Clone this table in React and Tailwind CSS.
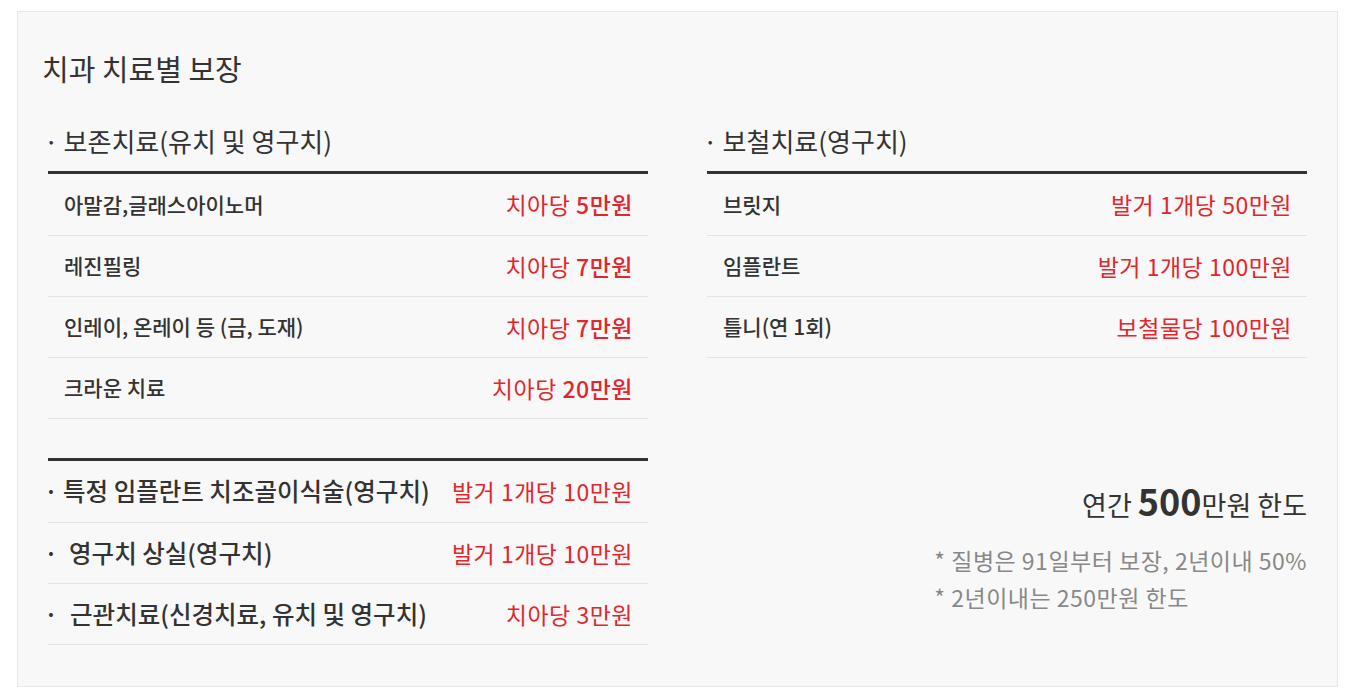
import React from 'react';

const FONT = { fontFamily: '"Noto Sans CJK KR", "Noto Sans", sans-serif' };

const basicRows = [
  { name: '아말감,글래스아이노머', unit: '치아당', amount: '5만원' },
  { name: '레진필링', unit: '치아당', amount: '7만원' },
  { name: '인레이, 온레이 등 (금, 도재)', unit: '치아당', amount: '7만원' },
  { name: '크라운 치료', unit: '치아당', amount: '20만원' },
];

const extraRows = [
  { name: '특정 임플란트 치조골이식술(영구치)', value: '발거 1개당 10만원', gap: 'mr-[5px]' },
  { name: '영구치 상실(영구치)', value: '발거 1개당 10만원', gap: 'mr-[11px]' },
  { name: '근관치료(신경치료, 유치 및 영구치)', value: '치아당 3만원', gap: 'mr-[12px]' },
];

const prostheticRows = [
  { name: '브릿지', value: '발거 1개당 50만원' },
  { name: '임플란트', value: '발거 1개당 100만원' },
  { name: '틀니(연 1회)', value: '보철물당 100만원' },
];

const SectionTitle = ({ children }) => (
  <h3 className="text-[26px] leading-[30px] text-[#333] mb-[15px]">
    <span className="-ml-[4px] mr-[5px]">·</span>
    {children}
  </h3>
);

const Row = ({ children }) => (
  <li className="flex items-center justify-between h-[61px] first:h-[62px] border-b border-[#e3e3e3] pl-[16px] pr-[15px]">
    {children}
  </li>
);

export default function App() {
  return (
    <div className="min-h-screen bg-white pt-[11px] pl-[17px]" style={FONT}>
      <div className="w-[1321px] h-[676px] border border-[#e8e8e8] bg-[#f8f8f8] px-[30px] pt-[40px]">
        <h2 className="-ml-[6px] text-[29px] leading-[32px] text-[#333]">치과 치료별 보장</h2>

        <div className="mt-[42px] flex justify-between">
          {/* 왼쪽: 보존치료 + 기타 */}
          <div className="w-[600px]">
            <SectionTitle>보존치료(유치 및 영구치)</SectionTitle>
            <ul className="border-t-[3px] border-[#333]">
              {basicRows.map((r) => (
                <Row key={r.name}>
                  <span className="text-[21px] font-medium text-[#333]">{r.name}</span>
                  <span className="text-[23px] text-[#e2262c] tracking-[0.5px]">
                    {r.unit} <span className="font-medium">{r.amount}</span>
                  </span>
                </Row>
              ))}
            </ul>

            <ul className="mt-[39px] border-t-[3px] border-[#333]">
              {extraRows.map((r) => (
                <li
                  key={r.name}
                  className="flex items-center justify-between h-[61px] first:h-[62px] border-b border-[#e3e3e3] pr-[15px]"
                >
                  <span className="text-[24.5px] font-medium text-[#333]">
                    <span className={`-ml-[4px] ${r.gap}`}>·</span>
                    {r.name}
                  </span>
                  <span className="text-[23px] text-[#e2262c] tracking-[0.5px]">{r.value}</span>
                </li>
              ))}
            </ul>
          </div>

          {/* 오른쪽: 보철치료 + 한도 */}
          <div className="w-[600px] flex flex-col">
            <SectionTitle>보철치료(영구치)</SectionTitle>
            <ul className="border-t-[3px] border-[#333]">
              {prostheticRows.map((r) => (
                <Row key={r.name}>
                  <span className="text-[21px] font-medium text-[#333]">{r.name}</span>
                  <span className="text-[23px] text-[#e2262c] tracking-[0.5px]">{r.value}</span>
                </Row>
              ))}
            </ul>

            <p className="mt-[122px] self-end text-[27px] leading-[40px] text-[#333]">
              연간 <span className="text-[36px] font-bold">500</span>만원 한도
            </p>
            <div className="mt-[17px] self-end text-[23px] leading-[37px] text-[#888] tracking-[0.5px]">
              <p>* 질병은 91일부터 보장, 2년이내 50%</p>
              <p>* 2년이내는 250만원 한도</p>
            </div>
          </div>
        </div>
      </div>
    </div>
  );
}
